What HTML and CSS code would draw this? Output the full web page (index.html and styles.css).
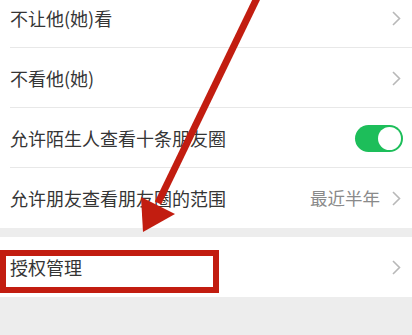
FILE: index.html
```html
<!DOCTYPE html>
<html lang="zh">
<head>
<meta charset="utf-8">
<link rel="stylesheet" href="styles.css">
</head>
<body>
<div class="page">
  <div class="group group-top">
    <div class="row">
      <span class="label">不让他(她)看</span>
      <span class="chev"><svg width="9" height="15" viewBox="0 0 9 15"><path d="M1 1 L7.5 7.5 L1 14" fill="none" stroke="#b8b8b8" stroke-width="1.6"/></svg></span>
    </div>
    <div class="row">
      <span class="label">不看他(她)</span>
      <span class="chev"><svg width="9" height="15" viewBox="0 0 9 15"><path d="M1 1 L7.5 7.5 L1 14" fill="none" stroke="#b8b8b8" stroke-width="1.6"/></svg></span>
    </div>
    <div class="row">
      <span class="label">允许陌生人查看十条朋友圈</span>
      <span class="toggle"><span class="knob"></span></span>
    </div>
    <div class="row last">
      <span class="label">允许朋友查看朋友圈的范围</span>
      <span class="value">最近半年</span>
      <span class="chev"><svg width="9" height="15" viewBox="0 0 9 15"><path d="M1 1 L7.5 7.5 L1 14" fill="none" stroke="#b8b8b8" stroke-width="1.6"/></svg></span>
    </div>
  </div>
  <div class="group">
    <div class="row last">
      <span class="label">授权管理</span>
      <span class="chev"><svg width="9" height="15" viewBox="0 0 9 15"><path d="M1 1 L7.5 7.5 L1 14" fill="none" stroke="#b8b8b8" stroke-width="1.6"/></svg></span>
      <span class="redbox"></span>
    </div>
  </div>
  <svg class="arrow" width="412" height="335" viewBox="0 0 412 335">
    <line x1="258" y1="-4" x2="158" y2="203" stroke="#c21d10" stroke-width="7"/>
    <polygon points="143,232 141,197 175,214" fill="#c21d10"/>
  </svg>
</div>
</body>
</html>
```

FILE: styles.css
```css
html, body {
  margin: 0;
  padding: 0;
  background: #ededed;
}
.page {
  position: relative;
  width: 412px;
  height: 335px;
  overflow: hidden;
  font-family: "Noto Sans CJK SC", "Noto Sans", sans-serif;
}
.group {
  background: #fff;
  margin-bottom: 9px;
}
.group-top {
  margin-top: -12px;
}
.row {
  position: relative;
  height: 60px;
  display: flex;
  align-items: center;
  padding: 0 11px 0 10px;
  box-sizing: border-box;
}
.row::after {
  content: "";
  position: absolute;
  left: 10px;
  right: 0;
  bottom: 0;
  height: 1px;
  background: #e8e8e8;
}
.row.last::after {
  content: none;
}
.label {
  flex: 1;
  font-size: 18px;
  color: #353535;
  line-height: 24px;
}
.value {
  font-size: 17.5px;
  color: #8a8a8a;
  margin-right: 12px;
  line-height: 24px;
}
.chev {
  display: flex;
  align-items: center;
}
.toggle {
  width: 48px;
  height: 27px;
  border-radius: 14px;
  background: #1dbe5a;
  position: relative;
  margin-right: -2px;
}
.knob {
  position: absolute;
  right: 2px;
  top: 2px;
  width: 23px;
  height: 23px;
  border-radius: 50%;
  background: #fff;
}
.redbox {
  position: absolute;
  left: 0;
  top: 13px;
  width: 219px;
  height: 43px;
  box-sizing: border-box;
  border: 6px solid #c21d10;
}
.arrow {
  position: absolute;
  left: 0;
  top: 0;
  pointer-events: none;
}
```
